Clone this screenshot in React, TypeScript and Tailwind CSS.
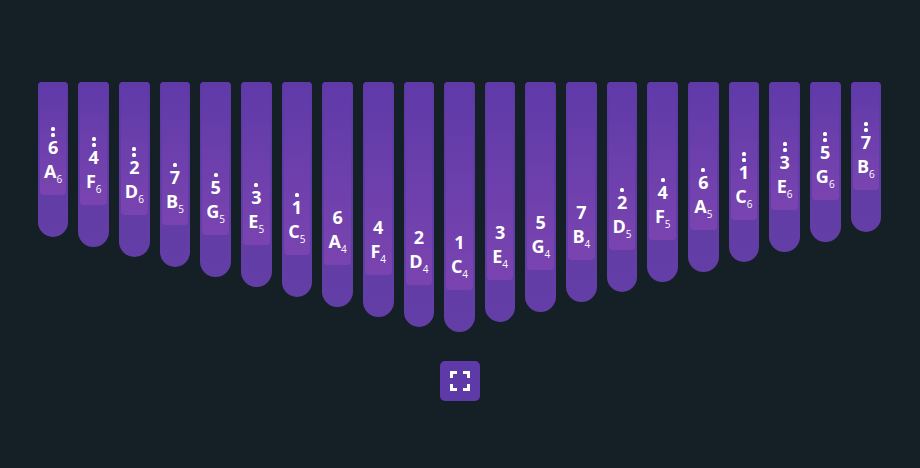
import React from 'react'

type Tine = { digit: string; dots: number; note: string; octave: string; height: number }

// left to right, heights grow toward the middle C4 tine
const tines: Tine[] = [
  { digit: '6', dots: 2, note: 'A', octave: '6', height: 155 },
  { digit: '4', dots: 2, note: 'F', octave: '6', height: 165 },
  { digit: '2', dots: 2, note: 'D', octave: '6', height: 175 },
  { digit: '7', dots: 1, note: 'B', octave: '5', height: 185 },
  { digit: '5', dots: 1, note: 'G', octave: '5', height: 195 },
  { digit: '3', dots: 1, note: 'E', octave: '5', height: 205 },
  { digit: '1', dots: 1, note: 'C', octave: '5', height: 215 },
  { digit: '6', dots: 0, note: 'A', octave: '4', height: 225 },
  { digit: '4', dots: 0, note: 'F', octave: '4', height: 235 },
  { digit: '2', dots: 0, note: 'D', octave: '4', height: 245 },
  { digit: '1', dots: 0, note: 'C', octave: '4', height: 250 },
  { digit: '3', dots: 0, note: 'E', octave: '4', height: 240 },
  { digit: '5', dots: 0, note: 'G', octave: '4', height: 230 },
  { digit: '7', dots: 0, note: 'B', octave: '4', height: 220 },
  { digit: '2', dots: 1, note: 'D', octave: '5', height: 210 },
  { digit: '4', dots: 1, note: 'F', octave: '5', height: 200 },
  { digit: '6', dots: 1, note: 'A', octave: '5', height: 190 },
  { digit: '1', dots: 2, note: 'C', octave: '6', height: 180 },
  { digit: '3', dots: 2, note: 'E', octave: '6', height: 170 },
  { digit: '5', dots: 2, note: 'G', octave: '6', height: 160 },
  { digit: '7', dots: 2, note: 'B', octave: '6', height: 150 },
]

const TineKey = ({ tine }: { tine: Tine }) => (
  <div
    className="flex flex-1 flex-col rounded-t-[4px] rounded-b-[16px] bg-gradient-to-b from-[#5e3aa8] to-[#633ea6] px-[2px] pb-[42px]"
    style={{ height: tine.height }}
  >
    <div className="flex flex-1 flex-col items-center justify-end rounded-b-[4px] bg-gradient-to-b from-[#5e3aa8] to-[#7a44b0] pb-[12px] text-white">
      {tine.dots > 0 && (
        <div className="-mb-[2px] flex flex-col items-center gap-[2px]">
          {Array.from({ length: tine.dots }).map((_, i) => (
            <span key={i} className="h-[4px] w-[4px] rounded-[1.5px] bg-white" />
          ))}
        </div>
      )}
      <span className="text-[18px] leading-[24px] font-bold">{tine.digit}</span>
      <span className="text-[18px] leading-[24px] font-bold">
        {tine.note}
        <sub className="align-[-2px] text-[10px] leading-none font-normal">{tine.octave}</sub>
      </span>
    </div>
  </div>
)

const App = () => {
  return (
    <div className="flex h-[468px] w-[920px] flex-col items-center bg-[#151f26] pt-[82px] font-['Open_Sans',sans-serif]">
      <div className="mr-[1px] flex h-[250px] w-[843.5px] items-start gap-[10px]">
        {tines.map((tine, i) => (
          <TineKey key={i} tine={tine} />
        ))}
      </div>
      <button className="mt-[29px] flex h-10 w-10 items-center justify-center rounded-[5px] bg-[#5e3aa8]">
        <svg width="20" height="20" viewBox="0 0 20 20" fill="none" stroke="#ffffff" strokeWidth="3">
          <path d="M1.5 7V1.5H7M13 1.5H18.5V7M18.5 13V18.5H13M7 18.5H1.5V13" />
        </svg>
      </button>
    </div>
  )
}

export default App
